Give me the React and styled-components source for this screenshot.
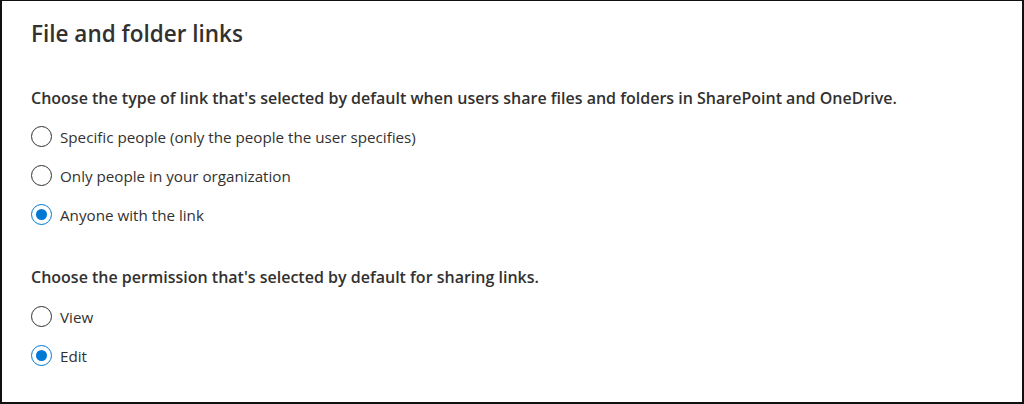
import React, { useState } from 'react';
import styled, { createGlobalStyle } from 'styled-components';

const GlobalStyle = createGlobalStyle`
  html, body {
    margin: 0;
    padding: 0;
    background: #ffffff;
  }
  body {
    font-family: "Open Sans", "Noto Sans", "Liberation Sans", sans-serif;
    color: #323130;
  }
`;

const Frame = styled.section`
  box-sizing: border-box;
  width: 1024px;
  height: 404px;
  border: 2px solid #111111;
  border-top-width: 1px;
  padding: 19px 0 0 29px;
  overflow: hidden;
`;

const Title = styled.h2`
  margin: 0;
  font-size: 22.5px;
  line-height: 28px;
  font-weight: 600;
  color: #323130;
`;

const Question = styled.p`
  margin: ${({ $first }) => ($first ? '39px 0 8px' : '32px 0 9px')};
  font-size: 16px;
  line-height: 22px;
  font-weight: 600;
  color: #323130;
`;

const Options = styled.div`
  display: flex;
  flex-direction: column;
`;

const Option = styled.label`
  display: flex;
  align-items: center;
  gap: 8px;
  height: 39px;
  font-size: 15.2px;
  color: #323130;
  cursor: pointer;
`;

const Circle = styled.span`
  box-sizing: border-box;
  width: 21px;
  height: 21px;
  border-radius: 50%;
  border: 1px solid ${({ $on }) => ($on ? '#0078d4' : '#323130')};
  display: flex;
  align-items: center;
  justify-content: center;

  &::after {
    content: '';
    width: 11px;
    height: 11px;
    border-radius: 50%;
    background: #0078d4;
    display: ${({ $on }) => ($on ? 'block' : 'none')};
  }
`;

const RadioGroup = ({ options, value, onChange }) => (
  <Options>
    {options.map((opt) => (
      <Option key={opt} onClick={() => onChange(opt)}>
        <Circle $on={value === opt} />
        {opt}
      </Option>
    ))}
  </Options>
);

const linkTypes = [
  'Specific people (only the people the user specifies)',
  'Only people in your organization',
  'Anyone with the link',
];

const permissions = ['View', 'Edit'];

const App = () => {
  const [linkType, setLinkType] = useState('Anyone with the link');
  const [permission, setPermission] = useState('Edit');

  return (
    <>
      <GlobalStyle />
      <Frame>
        <Title>File and folder links</Title>
        <Question $first>
          Choose the type of link that's selected by default when users share files and folders in SharePoint and
          OneDrive.
        </Question>
        <RadioGroup options={linkTypes} value={linkType} onChange={setLinkType} />
        <Question>Choose the permission that's selected by default for sharing links.</Question>
        <RadioGroup options={permissions} value={permission} onChange={setPermission} />
      </Frame>
    </>
  );
};

export default App;
